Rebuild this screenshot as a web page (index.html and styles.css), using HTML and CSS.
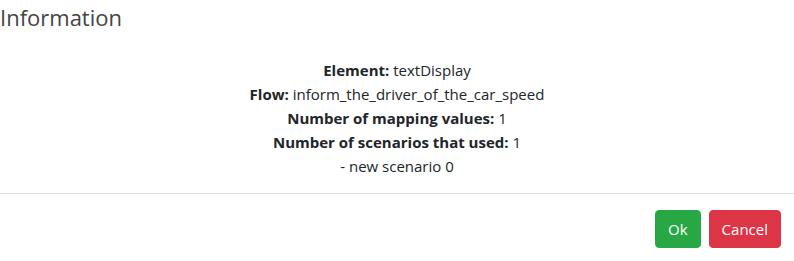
FILE: index.html
```html
<!DOCTYPE html>
<html>
<head>
<meta charset="utf-8">
<link rel="stylesheet" href="styles.css">
</head>
<body>
<div class="modal">
  <div class="modal-header">
    <h5 class="modal-title">Information</h5>
  </div>
  <div class="modal-body">
    <div class="line"><b>Element:</b> textDisplay</div>
    <div class="line"><b>Flow:</b> inform_the_driver_of_the_car_speed</div>
    <div class="line"><b>Number of mapping values:</b> 1</div>
    <div class="line"><b>Number of scenarios that used:</b> 1</div>
    <div class="line">- new scenario 0</div>
  </div>
  <div class="modal-footer">
    <button class="btn btn-ok">Ok</button>
    <button class="btn btn-cancel">Cancel</button>
  </div>
</div>
</body>
</html>
```

FILE: styles.css
```css
html, body {
  margin: 0;
  padding: 0;
  background: #fff;
}
body {
  font-family: "Open Sans", "Noto Sans", sans-serif;
  color: #212529;
  width: 794px;
  height: 261px;
  overflow: hidden;
}
.modal {
  display: flex;
  flex-direction: column;
}
.modal-header {
  height: 34px;
}
.modal-title {
  margin: 0;
  font-size: 22px;
  font-weight: 400;
  line-height: 34px;
  color: #444;
}
.modal-body {
  padding: 24px 0 15px;
  text-align: center;
  font-size: 15px;
  line-height: 24px;
}
.modal-body b {
  font-weight: 700;
}
.modal-footer {
  border-top: 1px solid #dee2e6;
  display: flex;
  justify-content: flex-end;
  gap: 8px;
  padding: 16px 13px 13px 0;
}
.btn {
  font-family: inherit;
  font-size: 15px;
  line-height: 24px;
  height: 38px;
  padding: 6px 12px;
  border: 1px solid transparent;
  border-radius: 4px;
  color: #fff;
}
.btn-ok {
  background: #28a745;
  border-color: #28a745;
}
.btn-cancel {
  background: #dc3545;
  border-color: #dc3545;
}
```
